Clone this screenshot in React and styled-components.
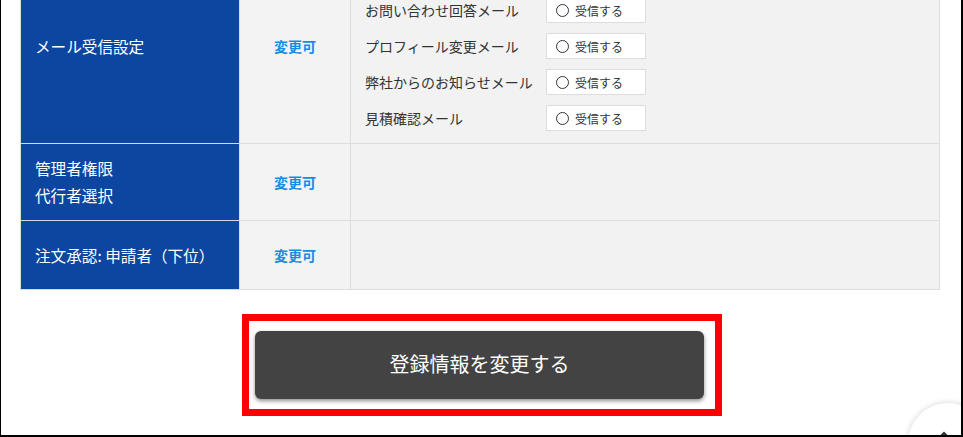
import React from 'react';
import styled, { createGlobalStyle } from 'styled-components';

const GlobalStyle = createGlobalStyle`
  html, body {
    margin: 0;
    padding: 0;
    background: #ffffff;
  }
  body {
    font-family: "Noto Sans CJK JP", "Noto Sans", sans-serif;
    color: #333333;
  }
  * {
    box-sizing: border-box;
  }
`;

const Viewport = styled.div`
  position: relative;
  width: 963px;
  height: 437px;
  overflow: hidden;
  border-left: 1px solid #000000;
  border-right: 2px solid #000000;
  border-bottom: 2px solid #000000;
  background: #ffffff;
`;

const Page = styled.div`
  display: flex;
  flex-direction: column;
  align-items: flex-start;
  width: 960px;
`;

const Table = styled.div`
  display: grid;
  grid-template-columns: 219px 111px 589px;
  width: 920px;
  margin: -14px 0 0 19px;
  border-top: 1px solid #dddddd;
  border-left: 1px solid #dddddd;
`;

const Cell = styled.div`
  display: flex;
  align-items: ${(p) => (p.$top ? 'flex-start' : 'center')};
  min-height: ${(p) => p.$height || 0}px;
  border-right: 1px solid #dddddd;
  border-bottom: 1px solid #dddddd;
`;

const LabelCell = styled(Cell)`
  background: #0d46a0;
  color: #ffffff;
  font-size: 15.6px;
  line-height: 27px;
  padding: ${(p) => (p.$top ? '46px 14px 0' : '0 14px')};
  border-bottom-color: #d6d9e0;
`;

const StatusCell = styled(Cell)`
  justify-content: center;
  background: #f3f3f3;
  color: #168de2;
  font-size: 14px;
  font-weight: bold;
  line-height: 27px;
  padding-top: ${(p) => (p.$top ? '46px' : '0')};
`;

const ContentCell = styled(Cell)`
  flex-direction: column;
  align-items: stretch;
  background: #f2f2f2;
  padding: 5px 14px 7px;
`;

const MailRow = styled.div`
  display: grid;
  grid-template-columns: 181px 100px;
  align-items: center;
  height: 36px;
  font-size: 14px;
  color: #333333;
`;

const ReceiveBox = styled.label`
  display: flex;
  align-items: center;
  gap: 6px;
  height: 26px;
  padding-left: 9px;
  background: #ffffff;
  border: 1px solid #dddddd;
  font-size: 12px;
  color: #333333;
`;

const Radio = styled.span`
  width: 13px;
  height: 13px;
  border: 1.5px solid #333333;
  border-radius: 50%;
  background: #ffffff;
`;

const RedFrame = styled.div`
  margin-top: 24px;
  margin-left: 241px;
  width: 480px;
  border: 7px solid #ff0000;
  padding: 10px 11px 10px 6px;
`;

const SubmitButton = styled.button`
  display: flex;
  align-items: center;
  justify-content: center;
  width: 449px;
  height: 68px;
  padding: 0 0 4px;
  border: none;
  border-radius: 6px;
  background: #434343;
  color: #ffffff;
  font-family: "Noto Sans CJK JP", "Noto Sans", sans-serif;
  font-size: 20px;
  box-shadow: 0 2px 4px rgba(0, 0, 0, 0.45);
  cursor: pointer;
`;

const PageTop = styled.div`
  position: absolute;
  left: 907px;
  top: 403px;
  width: 80px;
  height: 80px;
  border-radius: 50%;
  background: #ffffff;
  box-shadow: 0 0 6px rgba(0, 0, 0, 0.18);
  display: flex;
  justify-content: center;
  padding-top: 28px;
  padding-right: 8px;
`;

const mails = [
  'お問い合わせ回答メール',
  'プロフィール変更メール',
  '弊社からのお知らせメール',
  '見積確認メール',
];

export default function App() {
  return (
    <>
      <GlobalStyle />
      <Viewport>
        <Page>
          <Table>
            <LabelCell $top $height={156}>メール受信設定</LabelCell>
            <StatusCell $top>変更可</StatusCell>
            <ContentCell>
              {mails.map((m) => (
                <MailRow key={m}>
                  <span>{m}</span>
                  <ReceiveBox>
                    <Radio />
                    受信する
                  </ReceiveBox>
                </MailRow>
              ))}
            </ContentCell>

            <LabelCell $height={77}>
              管理者権限
              <br />
              代行者選択
            </LabelCell>
            <StatusCell>変更可</StatusCell>
            <ContentCell />

            <LabelCell $height={69}>注文承認: 申請者（下位）</LabelCell>
            <StatusCell>変更可</StatusCell>
            <ContentCell />
          </Table>

          <RedFrame>
            <SubmitButton>登録情報を変更する</SubmitButton>
          </RedFrame>
        </Page>
        <PageTop>
          <svg width="12" height="8" viewBox="0 0 12 8">
            <path d="M1 7 L6 2 L11 7" fill="none" stroke="#333" strokeWidth="2.2" />
          </svg>
        </PageTop>
      </Viewport>
    </>
  );
}
